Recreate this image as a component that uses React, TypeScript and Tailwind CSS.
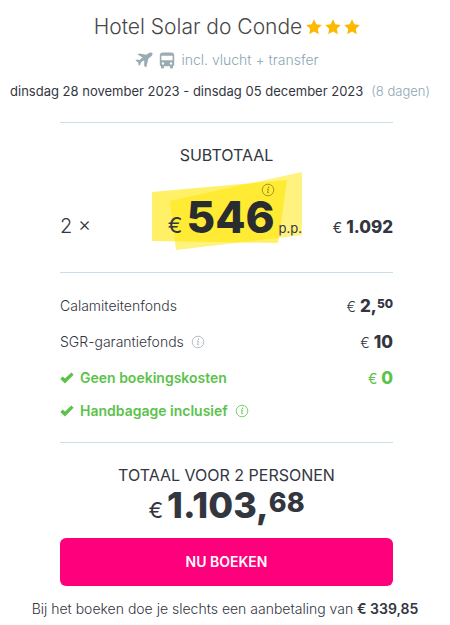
import React from "react";
import clsx from "clsx";

const Star = () => (
  <svg viewBox="0 0 16 16" className="size-4 fill-[#fdb900]" aria-hidden="true">
    <path d="M8 0.3 10.3 5.2 15.8 5.9 11.8 9.7 12.8 15.2 8 12.6 3.2 15.2 4.2 9.7 0.2 5.9 5.7 5.2Z" />
  </svg>
);

const Plane = () => (
  <svg viewBox="0 0 18 16" className="h-4 w-[18px] fill-[#9aabb3]" aria-hidden="true">
    <path d="M17.4 1.2C17 0.3 15.6 0.2 14.4 0.8L11.2 2.8 4.4 1.4 2.6 2.6 7.6 5.6 4.4 8 1.8 7.6 0.4 8.6 3.2 10.4 3.8 13.8 5.3 12.8 6 10.2 9.2 8.2 9.2 14 11.2 15.4 13.4 6.6 16 4.6C17.2 3.6 17.8 2.2 17.4 1.2Z" />
  </svg>
);

const Bus = () => (
  <svg viewBox="0 0 16 17" className="h-[17px] w-4 fill-[#9aabb3]" aria-hidden="true">
    <path
      fillRule="evenodd"
      d="M3.5 0.5H12.5Q15.2 0.9 15.2 3.5V12.8Q15.2 14 14 14V15.5Q14 16.5 13 16.5H12Q11 16.5 11 15.5V14.2H5V15.5Q5 16.5 4 16.5H3Q2 16.5 2 15.5V14Q0.8 14 0.8 12.8V3.5Q0.8 0.9 3.5 0.5ZM2.4 3.8V8.2H13.6V3.8ZM4 10.2A1.2 1.2 0 1 0 4 12.6 1.2 1.2 0 1 0 4 10.2ZM12 10.2A1.2 1.2 0 1 0 12 12.6 1.2 1.2 0 1 0 12 10.2Z"
    />
  </svg>
);

const Check = () => (
  <svg viewBox="0 0 14 12" className="h-3 w-3.5 shrink-0 fill-[#5cc24c]" aria-hidden="true">
    <path d="M0.3 7 2.7 4.6 5 6.6 11.4 0.5 13.6 2.7 5 11.5Z" />
  </svg>
);

const InfoButton = ({ label, className }: { label: string; className?: string }) => (
  <button type="button" aria-label={label} className={clsx("block size-3 shrink-0", className)}>
    <svg viewBox="0 0 12 12" className="size-3 overflow-visible" fill="none" stroke="currentColor">
      <circle cx="6" cy="6" r="5.8" strokeWidth="0.8" />
      <circle cx="6.6" cy="3.3" r="0.7" fill="currentColor" stroke="none" />
      <path d="M5 5.1H6.4L5.5 8.6Q5.4 9.2 6.8 8.5" strokeWidth="0.9" />
    </svg>
  </button>
);

const Amount = ({ whole, cents }: { whole: string; cents?: string }) => (
  <span className="flex items-baseline gap-1 leading-5">
    <span className="text-sm">€</span>
    <span className="text-[17px] font-extrabold">
      {whole}
      {cents && <span className="relative -top-1 text-xs">{cents}</span>}
    </span>
  </span>
);

const BookingSummary = () => {
  return (
    <main className="bg-white pt-[13px] pb-1 font-['Inter','Liberation_Sans',sans-serif] text-[#33363f]">
      <header className="text-center whitespace-nowrap">
        <div className="flex items-center justify-center gap-1 pl-1">
          <h1 className="text-[21px] leading-7 font-light text-[#484848]">Hotel Solar do Conde</h1>
          <span className="flex gap-[3px]" role="img" aria-label="3 sterren">
            <Star />
            <Star />
            <Star />
          </span>
        </div>
        <p className="mt-[9px] flex items-center justify-center gap-1.5 pl-1 text-sm leading-5 font-light text-[#8ba6b4]">
          <Plane />
          <Bus />
          incl. vlucht + transfer
        </p>
        <p className="mt-[11px] flex justify-center gap-2 pr-2.5 text-[13px] leading-5">
          <span>dinsdag 28 november 2023 - dinsdag 05 december 2023</span>
          <span className="font-light text-[#8ba6b4]">(8 dagen)</span>
        </p>
      </header>

      <div className="mt-[21px] mr-[57px] ml-[60px]">
        <section className="border-t border-[#c5dfeb] pt-[22px] pb-[34px]">
          <h2 className="text-center text-base leading-5">SUBTOTAAL</h2>
          <div className="mt-2 flex h-[65px] items-end">
            <span className="text-xl leading-6 font-light">2 ×</span>
            <div className="relative ml-auto flex items-baseline gap-1">
              <svg
                viewBox="0 0 150 78"
                className="absolute right-0 -bottom-3 h-[78px] w-[150px] fill-[#ffe600]"
                aria-hidden="true"
              >
                <path d="M0 20 135 8 126 71 0 69Z" opacity="0.6" />
                <path d="M18 29 150 0 150 63 24 78Z" opacity="0.5" />
              </svg>
              <span className="relative text-[22px] leading-5">€</span>
              <strong className="relative text-[44px] leading-10 font-extrabold text-[#292d30]">546</strong>
              <span className="relative text-[13px] leading-5">p.p.</span>
              <InfoButton
                label="Informatie over de prijs"
                className="absolute right-7 bottom-[42px] text-[#8e8414]"
              />
            </div>
            <div className="flex w-[91px] justify-end">
              <Amount whole="1.092" />
            </div>
          </div>
        </section>

        <section className="border-t border-[#c5dfeb] pt-[21px] pb-[21px]">
          <ul className="text-sm leading-5">
            <li className="flex h-6 items-center justify-between font-light">
              Calamiteitenfonds
              <Amount whole="2," cents="50" />
            </li>
            <li className="mt-3 flex h-6 items-center justify-between font-light">
              <span className="flex items-center gap-2">
                SGR-garantiefonds
                <InfoButton label="Informatie over SGR-garantiefonds" className="text-[#a4afb8]" />
              </span>
              <Amount whole="10" />
            </li>
            <li className="mt-3 flex h-6 items-center justify-between text-[#5cc24c]">
              <span className="flex items-center gap-1.5 font-semibold">
                <Check />
                Geen boekingskosten
              </span>
              <Amount whole="0" />
            </li>
            <li className="mt-[11px] flex items-center gap-1.5 font-semibold text-[#5cc24c]">
              <Check />
              Handbagage inclusief
              <InfoButton label="Informatie over handbagage" className="ml-0.5" />
            </li>
          </ul>
        </section>

        <section className="border-t border-[#c5dfeb] pt-[22px] text-center">
          <h2 className="text-base leading-5">TOTAAL VOOR 2 PERSONEN</h2>
          <p className="flex items-baseline justify-center gap-1 leading-10">
            <span className="text-[22px]">€</span>
            <strong className="text-[36px] font-extrabold">
              1.103,<span className="relative -top-1.5 text-[27px]">68</span>
            </strong>
          </p>
          <button
            type="button"
            className="mt-2 h-12 w-full rounded-md bg-[#ff007d] text-sm font-semibold text-white"
          >
            NU BOEKEN
          </button>
        </section>
      </div>

      <p className="mt-[13px] text-center text-sm leading-5 font-light whitespace-nowrap">
        Bij het boeken doe je slechts een aanbetaling van <strong className="font-semibold">€ 339,85</strong>
      </p>
    </main>
  );
};

export default BookingSummary;
